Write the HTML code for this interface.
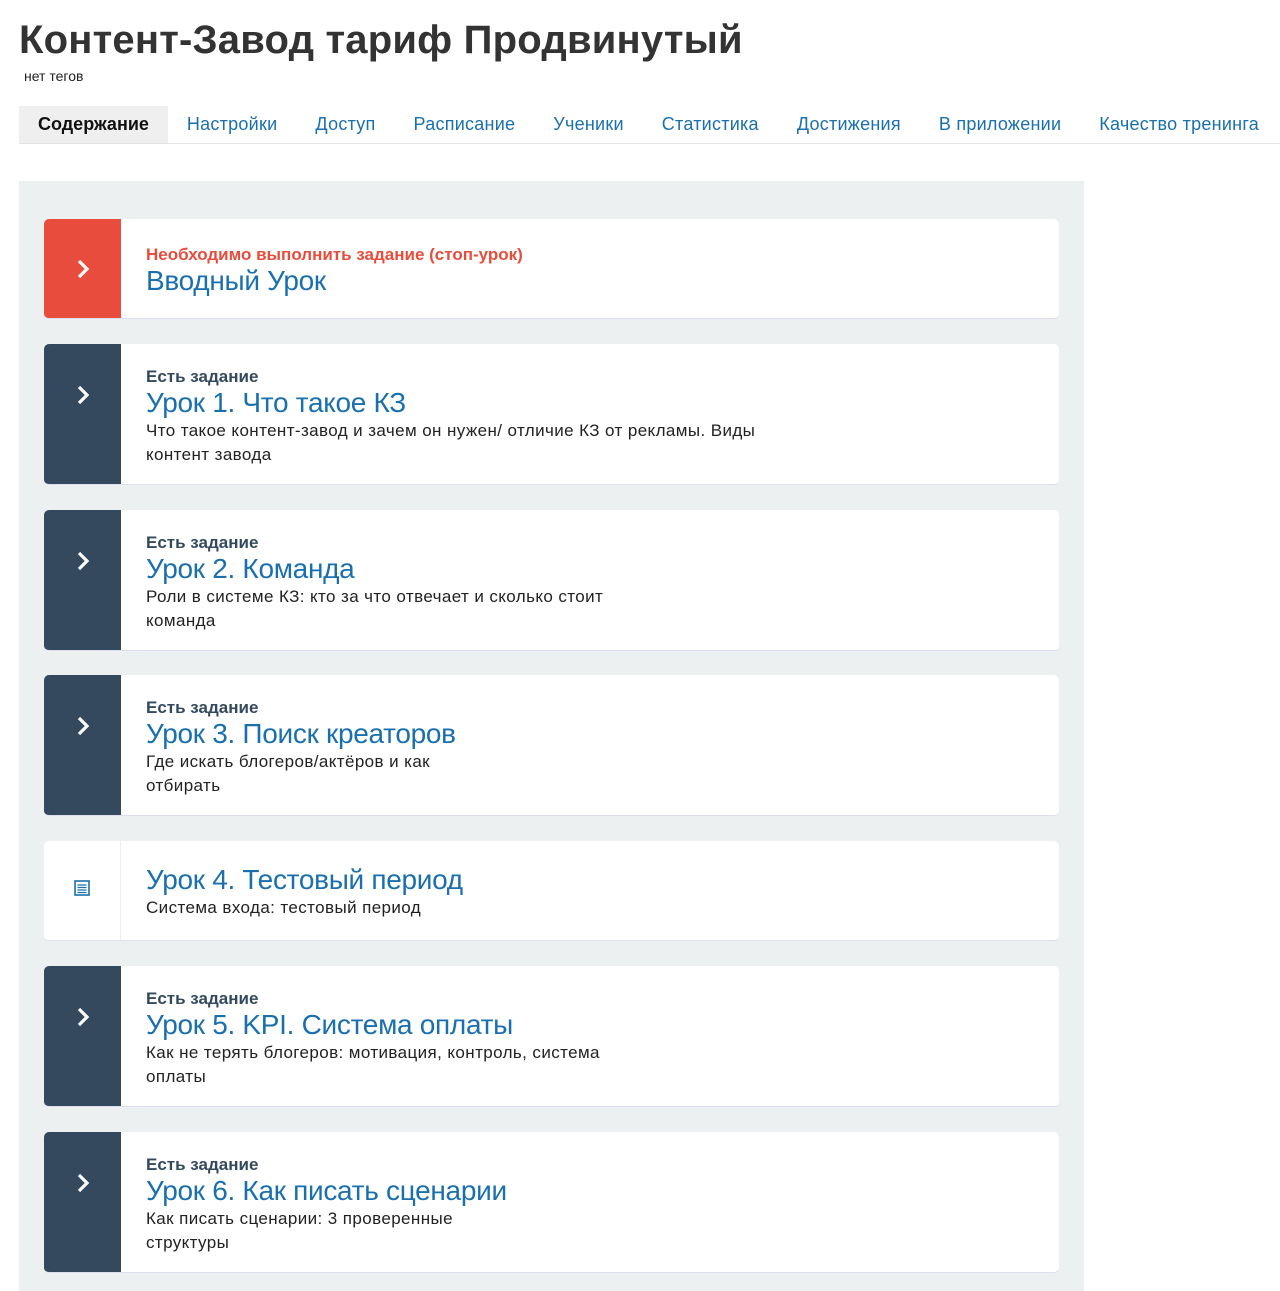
<!DOCTYPE html>
<html><head><meta charset="utf-8"><style>
*{box-sizing:border-box;margin:0;padding:0}
body{width:1280px;height:1280px;overflow:hidden;background:#fff;font-family:"Liberation Sans",sans-serif;color:#222}
h1{position:absolute;left:19px;top:18px;font-size:40px;font-weight:bold;color:#333;letter-spacing:0.2px}
.tags{position:absolute;left:24px;top:68px;font-size:14px;color:#222}
.tabs{position:absolute;left:19px;top:106px;width:1261px;height:38px;border-bottom:1px solid #e4e4e4;display:flex;white-space:nowrap;overflow:hidden}
.tabs div{flex-shrink:0;font-size:18px;color:#1a6fae;padding:0 19px;line-height:37px;letter-spacing:0.25px}
.tabs div.a{background:#efefef;color:#111;font-weight:bold;padding:0 19px;letter-spacing:0}
.panel{position:absolute;left:19px;top:181px;width:1065px;height:1110px;background:#ecf0f1}
.card{position:absolute;left:25px;width:1015px;background:#fff;border-radius:5px;overflow:hidden;border-bottom:1px solid #dde}
.ic{position:absolute;left:0;top:0;bottom:0;width:77px;background:#34495e;display:flex;align-items:center;justify-content:center}
.ic svg{margin-top:-38px}
.red .ic{background:#e74c3c}
.red .ic svg{margin-top:0}
.ic.w{background:#fff;border-right:1px solid #eee}
.ic.w svg{margin-top:-6px}
.body{position:absolute;left:102px;top:23px}
.lab{font-size:17px;font-weight:bold;color:#34495e;line-height:20px}
.red .lab{color:#e74c3c}
.t{font-size:28px;color:#1a6fae;line-height:32px;letter-spacing:-0.3px}
.d{font-size:17px;color:#222;line-height:24px;letter-spacing:0.4px}
</style></head><body>
<h1>Контент-Завод тариф Продвинутый</h1>
<div class="tags">нет тегов</div>
<div class="tabs"><div class="a">Содержание</div><div>Настройки</div><div>Доступ</div><div>Расписание</div><div>Ученики</div><div>Статистика</div><div>Достижения</div><div>В приложении</div><div>Качество тренинга</div></div>
<div class="panel">
<div class="card red" style="top:38px;height:100px"><div class="ic"><svg width="14" height="22" viewBox="0 0 14 22"><path d="M3 3l8 8-8 8" fill="none" stroke="#fff" stroke-width="3.2"/></svg></div><div class="body" style="top:26px"><div class="lab">Необходимо выполнить задание (стоп-урок)</div><div class="t">Вводный Урок</div></div></div>

<div class="card" style="top:163px;height:141px"><div class="ic"><svg width="14" height="22" viewBox="0 0 14 22"><path d="M3 3l8 8-8 8" fill="none" stroke="#fff" stroke-width="3.2"/></svg></div><div class="body"><div class="lab">Есть задание</div><div class="t">Урок 1. Что такое КЗ</div><div class="d">Что такое контент-завод и зачем он нужен/ отличие КЗ от рекламы. Виды<br>контент завода</div></div></div>

<div class="card" style="top:329px;height:141px"><div class="ic"><svg width="14" height="22" viewBox="0 0 14 22"><path d="M3 3l8 8-8 8" fill="none" stroke="#fff" stroke-width="3.2"/></svg></div><div class="body"><div class="lab">Есть задание</div><div class="t">Урок 2. Команда</div><div class="d">Роли в системе КЗ: кто за что отвечает и сколько стоит<br>команда</div></div></div>

<div class="card" style="top:494px;height:141px"><div class="ic"><svg width="14" height="22" viewBox="0 0 14 22"><path d="M3 3l8 8-8 8" fill="none" stroke="#fff" stroke-width="3.2"/></svg></div><div class="body"><div class="lab">Есть задание</div><div class="t">Урок 3. Поиск креаторов</div><div class="d">Где искать блогеров/актёров и как<br>отбирать</div></div></div>

<div class="card" style="top:660px;height:100px"><div class="ic w"><svg width="16" height="16" viewBox="0 0 16 16"><rect x="1" y="1" width="14" height="14" fill="none" stroke="#1a6fae" stroke-width="1.6"/><path d="M3.5 5h9M3.5 7.5h9M3.5 10h9M3.5 12.5h9" stroke="#1a6fae" stroke-width="1.3"/></svg></div><div class="body" style="top:23px"><div class="t">Урок 4. Тестовый период</div><div class="d">Система входа: тестовый период</div></div></div>

<div class="card" style="top:785px;height:141px"><div class="ic"><svg width="14" height="22" viewBox="0 0 14 22"><path d="M3 3l8 8-8 8" fill="none" stroke="#fff" stroke-width="3.2"/></svg></div><div class="body"><div class="lab">Есть задание</div><div class="t">Урок 5. KPI. Система оплаты</div><div class="d">Как не терять блогеров: мотивация, контроль, система<br>оплаты</div></div></div>

<div class="card" style="top:951px;height:141px"><div class="ic"><svg width="14" height="22" viewBox="0 0 14 22"><path d="M3 3l8 8-8 8" fill="none" stroke="#fff" stroke-width="3.2"/></svg></div><div class="body"><div class="lab">Есть задание</div><div class="t">Урок 6. Как писать сценарии</div><div class="d">Как писать сценарии: 3 проверенные<br>структуры</div></div></div>
</div>
</body></html>
